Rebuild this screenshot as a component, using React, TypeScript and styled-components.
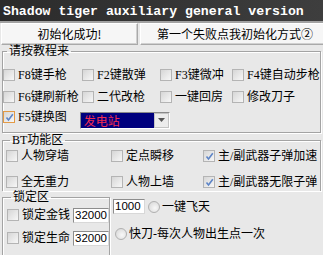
import styled, { createGlobalStyle } from 'styled-components';

const GlobalStyle = createGlobalStyle`
  html, body {
    margin: 0;
    padding: 0;
  }
  body {
    background: #e8e8e8;
    font-family: "Liberation Serif", "Noto Sans CJK SC", serif;
    font-size: 12px;
    color: #000;
  }
`;

const Window = styled.div`
  width: 323px;
  height: 255px;
  display: flex;
  flex-direction: column;
  overflow: hidden;
  background: #e8e8e8;
`;

const TitleBar = styled.div`
  flex: none;
  height: 23px;
  box-sizing: border-box;
  display: flex;
  align-items: center;
  padding: 2px 0 0 3px;
  background: linear-gradient(to right, #2b2b2b, #3e3e3e);
  border-bottom: 2px solid #a2a2a2;
  color: #fff;
  font: bold 13.2px "Liberation Mono", monospace;
  white-space: pre;
`;

const TabRow = styled.div`
  flex: none;
  display: flex;
  gap: 2px;
  height: 22px;
  padding-left: 1px;
`;

const Tab = styled.div<{ $w: number }>`
  flex: none;
  width: ${p => p.$w}px;
  box-sizing: border-box;
  display: flex;
  align-items: center;
  justify-content: center;
  background: #f6f6f6;
  border: 1px solid #a9a9a9;
  border-top-color: #fff;
  border-left-color: #fff;
  box-shadow: inset -1px -1px 0 #d0d0d0;
  font-family: "Noto Sans CJK SC", sans-serif;
  line-height: 14px;
  white-space: nowrap;
`;

const Group = styled.fieldset<{ $open?: boolean }>`
  margin: 0 2px;
  padding: 0;
  min-width: 0;
  border: 1px solid #a3a3a3;
  ${p => (p.$open ? 'border-bottom: none;' : '')}
  box-shadow: inset 1px 1px 0 #fff, 1px 1px 0 #fff;
`;

const Caption = styled.legend<{ $indent: number }>`
  margin-left: ${p => p.$indent}px;
  padding: 0 2px;
  line-height: 13px;
  font-size: 12px;
  white-space: nowrap;
`;

const Grid = styled.div<{ $cols: string; $pad: string; $gap: number }>`
  display: grid;
  grid-template-columns: ${p => p.$cols};
  row-gap: ${p => p.$gap}px;
  padding: ${p => p.$pad};
`;

const Row = styled.div`
  display: flex;
  align-items: center;
  height: 18px;
`;

const Check = styled.label`
  display: flex;
  align-items: center;
  gap: 3px;
  height: 18px;
  line-height: 14px;
  white-space: nowrap;
`;

const Box = styled.span<{ $hot?: boolean }>`
  flex: none;
  width: 12px;
  height: 12px;
  box-sizing: border-box;
  border: 1px solid ${p => (p.$hot ? '#e39a45' : '#b4b4b4')};
  background: linear-gradient(135deg, #d6d6d6, #f7f7f7);
  display: flex;
  align-items: center;
  justify-content: center;
`;

const Combo = styled.div`
  margin-left: 13px;
  margin-top: 6px;
  width: 90px;
  height: 17px;
  box-sizing: border-box;
  display: flex;
  border: 1px solid #8a8a8a;
  border-right-color: #fff;
  border-bottom-color: #fff;
  background: #00007e;
`;

const ComboText = styled.span`
  flex: 1;
  padding-left: 3px;
  color: #f02c50;
  line-height: 15px;
  font-family: "Noto Sans CJK SC", sans-serif;
`;

const DropButton = styled.span`
  flex: none;
  width: 15px;
  box-sizing: border-box;
  background: #ececec;
  border: 1px solid #c4c4c4;
  display: flex;
  align-items: center;
  justify-content: center;
`;

const Bottom = styled.div`
  display: flex;
  margin-top: 0;
`;

const LockGroup = styled(Group)`
  flex: none;
  width: 108px;
  box-sizing: border-box;
  margin-right: 0;
  height: 70px;
`;

const LockRows = styled.div`
  display: flex;
  flex-direction: column;
  gap: 5px;
  padding: 2px 0 0 4px;
`;

const Field = styled.span<{ $w: number }>`
  flex: none;
  width: ${p => p.$w}px;
  height: 15px;
  box-sizing: border-box;
  margin-left: auto;
  background: #fff;
  border: 1px solid #8d8d8d;
  border-right-color: #d8d8d8;
  border-bottom-color: #d8d8d8;
  font: 11.5px "Liberation Sans", sans-serif;
  line-height: 13px;
  padding-left: 1px;
`;

const Side = styled.div`
  display: flex;
  flex-direction: column;
  gap: 13px;
  padding: 8px 0 0 3px;
`;

const RadioLine = styled.label<{ $indent: number }>`
  display: flex;
  align-items: center;
  gap: 2px;
  padding-left: ${p => p.$indent}px;
  line-height: 14px;
  white-space: nowrap;
`;

const Radio = styled.span`
  flex: none;
  width: 12px;
  height: 12px;
  box-sizing: border-box;
  border-radius: 50%;
  border: 1px solid #b0b0b0;
  background: radial-gradient(circle at 60% 60%, #f8f8f8, #d4d4d4);
`;

const Tick = () => (
  <svg width="9" height="9" viewBox="0 0 9 9">
    <polyline points="1.5,4.5 3.5,7 7.8,1.2" fill="none" stroke="#5d84c6" strokeWidth="1.6" />
  </svg>
);

const CheckItem = ({ label, on, hot }: { label: string; on?: boolean; hot?: boolean }) => (
  <Check>
    <Box $hot={hot}>{on && <Tick />}</Box>
    {label}
  </Check>
);

export default function App() {
  return (
    <Window>
      <GlobalStyle />
      <TitleBar>Shadow tiger auxiliary general version</TitleBar>
      <TabRow>
        <Tab $w={137}>初始化成功!</Tab>
        <Tab $w={190}>第一个失败点我初始化方式②</Tab>
      </TabRow>

      <Group>
        <Caption $indent={4}>请按教程来</Caption>
        <Grid $cols="79px 78px 72px 1fr" $pad="8px 0 6px 0" $gap={4}>
          <CheckItem label="F8键手枪" />
          <CheckItem label="F2键散弹" />
          <CheckItem label="F3键微冲" />
          <CheckItem label="F4键自动步枪" />
          <CheckItem label="F6键刷新枪" />
          <CheckItem label="二代改枪" />
          <CheckItem label="一键回房" />
          <CheckItem label="修改刀子" />
        </Grid>
        <Row style={{ margin: '-4px 0 6px 0' }}>
          <CheckItem label="F5键换图" on hot />
          <Combo>
            <ComboText>发电站</ComboText>
            <DropButton>
              <svg width="7" height="4" viewBox="0 0 7 4">
                <polygon points="0,0 7,0 3.5,4" fill="#555" />
              </svg>
            </DropButton>
          </Combo>
        </Row>
      </Group>

      <Group $open style={{ marginTop: 1 }}>
        <Caption $indent={7}>BT功能区</Caption>
        <Grid $cols="105px 92px 1fr" $pad="0 0 0 3px" $gap={8}>
          <CheckItem label="人物穿墙" />
          <CheckItem label="定点瞬移" />
          <CheckItem label="主/副武器子弹加速" on />
          <CheckItem label="全无重力" />
          <CheckItem label="人物上墙" />
          <CheckItem label="主/副武器无限子弹" on />
        </Grid>
      </Group>

      <Bottom>
        <LockGroup>
          <Caption $indent={8}>锁定区</Caption>
          <LockRows>
            <Row>
              <CheckItem label="锁定金钱" />
              <Field $w={36}>32000</Field>
            </Row>
            <Row>
              <CheckItem label="锁定生命" />
              <Field $w={36}>32000</Field>
            </Row>
          </LockRows>
        </LockGroup>
        <Side>
          <RadioLine $indent={0}>
            <Field $w={32} style={{ marginLeft: 0, marginRight: 1 }}>1000</Field>
            <Radio />
            一键飞天
          </RadioLine>
          <RadioLine $indent={2}>
            <Radio />
            快刀-每次人物出生点一次
          </RadioLine>
        </Side>
      </Bottom>
    </Window>
  );
}
